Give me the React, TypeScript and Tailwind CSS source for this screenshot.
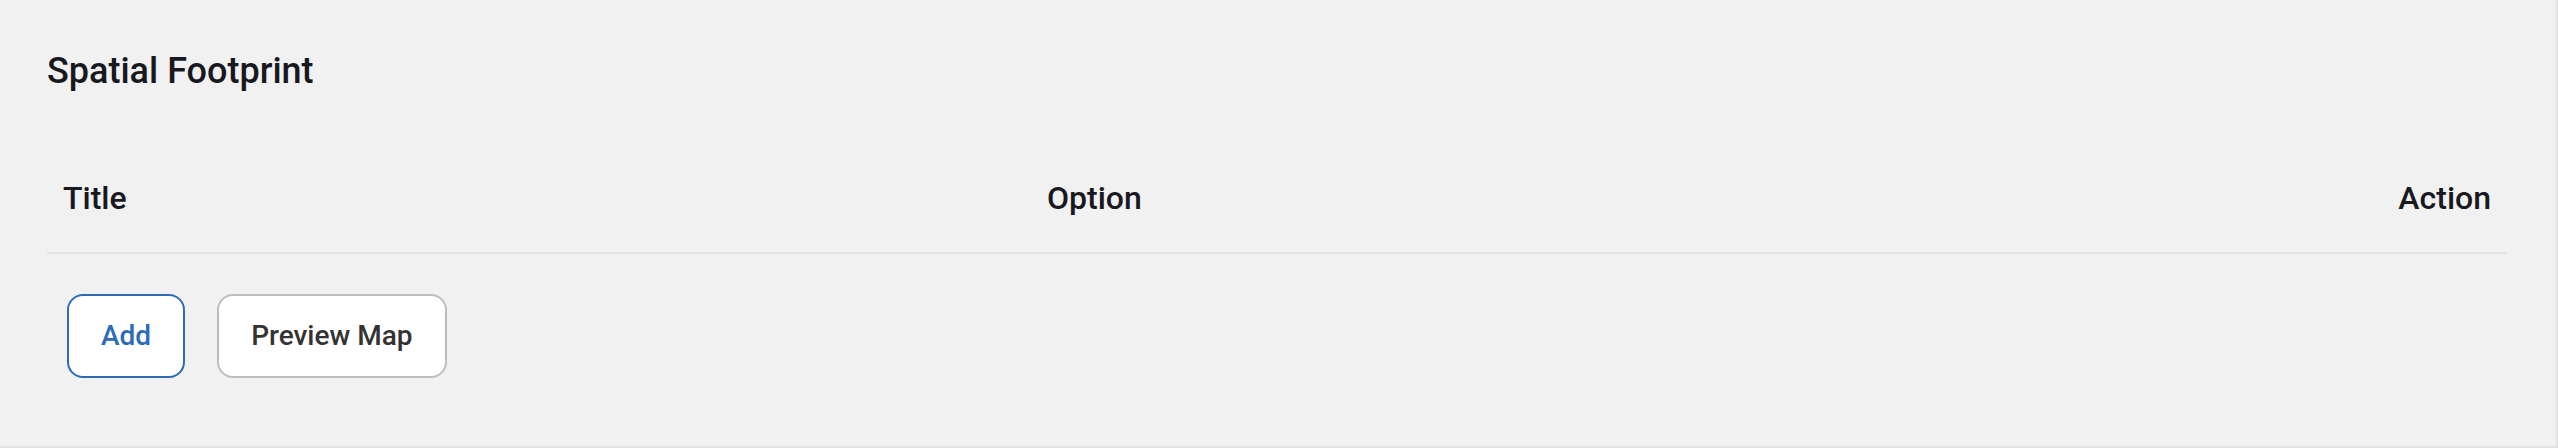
export default function App() {
  return (
    <section className="border-r-2 border-b-2 border-[#e2e2e2] bg-[#f1f1f1] pt-[49px] pr-[49px] pb-17 pl-[47px] font-['Roboto',sans-serif] text-[#181821]">
      <h2 className="text-4xl leading-[44px] font-medium">Spatial Footprint</h2>
      <table className="mt-[57px] w-full table-fixed border-collapse text-[32px] leading-[48px]">
        <thead>
          <tr className="border-b-2 border-[#e2e2e2]">
            <th scope="col" className="w-2/5 px-4 pt-6 pb-[30px] text-left font-medium">Title</th>
            <th scope="col" className="w-2/5 px-4 pt-6 pb-[30px] text-left font-medium">Option</th>
            <th scope="col" className="w-1/5 px-4 pt-6 pb-[30px] text-right font-medium">Action</th>
          </tr>
        </thead>
      </table>
      <div className="mt-10 flex gap-8 px-5 text-[28px] leading-[44px] font-medium">
        <button type="button" className="rounded-2xl border-2 border-[#2d6bb8] bg-white px-8 py-[18px] text-[#2d6bb8]">Add</button>
        <button type="button" className="rounded-2xl border-2 border-[#bdbdbd] bg-white px-8 py-[18px] text-[#333333]">Preview Map</button>
      </div>
    </section>
  );
}
